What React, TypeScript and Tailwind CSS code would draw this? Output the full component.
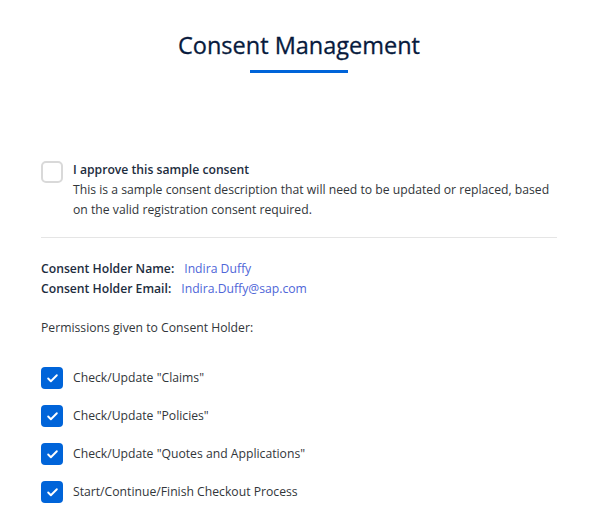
import { Check } from 'lucide-react'

const permissions = [
  'Check/Update "Claims"',
  'Check/Update "Policies"',
  'Check/Update "Quotes and Applications"',
  'Start/Continue/Finish Checkout Process',
]

export default function App() {
  return (
    <div className="min-h-[522px] bg-white font-['Open_Sans',sans-serif] text-[#32363a]">
      <div className="flex flex-col items-center pt-[30px]">
        <h1 className="text-[23.5px] leading-[30px] font-normal text-[#071a3d] [-webkit-text-stroke:0.3px_#071a3d]">
          Consent Management
        </h1>
        <div className="mt-[10px] h-[3px] w-[98px] bg-[#0064d9]" />
      </div>

      <div className="px-[41px] pt-[87px]">
        <div className="flex items-start gap-[10px] pb-[17px] border-b border-[#e5e5e5]">
          <span className="mt-px h-[22px] w-[22px] shrink-0 rounded-[5px] border-2 border-[#d9d9d9] bg-white" />
          <div className="text-[12.2px] leading-[20px]">
            <div className="font-semibold text-[#1d2d3e]">I approve this sample consent</div>
            <div>
              This is a sample consent description that will need to be updated or replaced, based on the valid
              registration consent required.
            </div>
          </div>
        </div>

        <div className="pt-[21px] text-[12.2px] leading-[20px]">
          <div>
            <span className="font-semibold text-[#1d2d3e]">Consent Holder Name:</span>
            <span className="ml-[10px] text-[#4f66d8]">Indira Duffy</span>
          </div>
          <div>
            <span className="font-semibold text-[#1d2d3e]">Consent Holder Email:</span>
            <span className="ml-[10px] text-[#4f66d8]">Indira.Duffy@sap.com</span>
          </div>
          <div className="mt-[19px]">Permissions given to Consent Holder:</div>
        </div>

        <div className="mt-[29px] flex flex-col gap-[16px]">
          {permissions.map((p) => (
            <div key={p} className="flex items-center gap-[10px]">
              <span className="flex h-[22px] w-[22px] shrink-0 items-center justify-center rounded-[4px] bg-[#0064d9]">
                <Check className="h-[13px] w-[13px] text-white" strokeWidth={3.5} />
              </span>
              <span className="text-[12.2px] leading-[20px]">{p}</span>
            </div>
          ))}
        </div>
      </div>
    </div>
  )
}
